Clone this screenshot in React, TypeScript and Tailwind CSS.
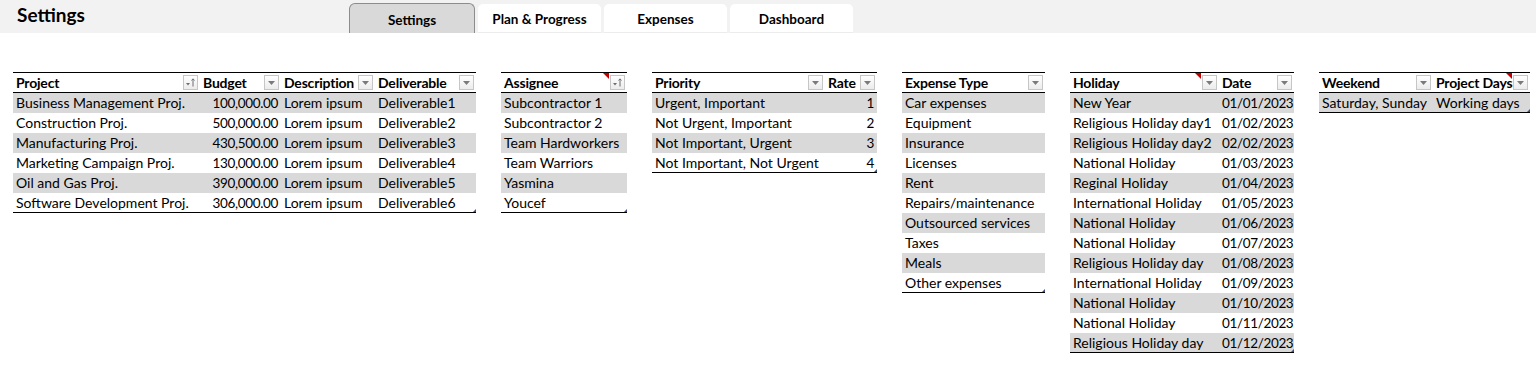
import React from 'react';

type Col = { title: string; width: string; align?: 'right'; sort?: boolean; note?: boolean };

interface TableProps {
  cols: Col[];
  rows: string[][];
  width: string;
}

function DropButton({ sort }: { sort?: boolean }) {
  return (
    <span className="absolute right-[2px] top-[2px] flex h-[15px] w-[15px] items-center justify-center border border-[#c6c6c6] bg-gradient-to-b from-white to-[#ececec]">
      {sort ? (
        <svg width="11" height="11" viewBox="0 0 11 11">
          <path d="M1 6 L5 6 L3 8.5 Z" fill="#6d6d6d" />
          <path d="M8 9.5 V2 M6.5 3.5 L8 1.8 L9.5 3.5" stroke="#6d6d6d" strokeWidth="1" fill="none" />
        </svg>
      ) : (
        <svg width="9" height="6" viewBox="0 0 9 6">
          <path d="M1 1 L8 1 L4.5 5 Z" fill="#7a7a7a" />
        </svg>
      )}
    </span>
  );
}

function SheetTable({ cols, rows, width }: TableProps) {
  return (
    <div className={`${width} shrink-0`}>
      <div className="flex h-[21px] border-y border-black">
        {cols.map(c => (
          <div
            key={c.title}
            className={`${c.width} relative shrink-0 pl-[3px] pt-[1px] text-[14px] font-bold leading-[18px] tracking-[-0.2px]`}
          >
            {c.title}
            {c.note && (
              <span className="absolute right-[18px] top-0 h-0 w-0 border-l-[6px] border-t-[6px] border-l-transparent border-t-[#c00000]" />
            )}
            <DropButton sort={c.sort} />
          </div>
        ))}
      </div>
      {rows.map((r, i) => (
        <div
          key={i}
          className={`relative flex h-[20px] ${i % 2 === 0 ? 'bg-[#d9d9d9]' : 'bg-white'} ${i === rows.length - 1 ? 'border-b border-black' : ''}`}
        >
          {r.map((cell, j) =>
            cols[j].align === 'right' ? (
              <div
                key={j}
                className={`${cols[j].width} shrink-0 whitespace-nowrap px-[3px] text-right text-[13.5px] leading-[20px] tracking-[-0.35px]`}
              >
                {cell}
              </div>
            ) : (
              <div key={j} className={`${cols[j].width} shrink-0 whitespace-nowrap px-[3px] text-[14px] leading-[20px]`}>
                {cell}
              </div>
            )
          )}
          {i === rows.length - 1 && (
            <span className="absolute bottom-0 right-0 h-0 w-0 border-b-[3px] border-l-[3px] border-b-[#3c4f8a] border-l-transparent" />
          )}
        </div>
      ))}
    </div>
  );
}

const tabs = ['Plan & Progress', 'Expenses', 'Dashboard'];

export default function App() {
  return (
    <div className="min-h-[392px] bg-white text-black" style={{ fontFamily: 'Lato, "Open Sans", sans-serif' }}>
      <div className="flex h-[33px] items-end bg-[#f2f2f2]">
        <div className="h-full w-[349px] shrink-0 pl-[17px] pt-[2px] text-[19px] font-bold leading-[26px]">Settings</div>
        <div className="flex items-end gap-[3px]">
          <div className="flex h-[30px] w-[126px] items-center justify-center rounded-t-[6px] border border-b-0 border-[#8c8c8c] bg-[#d9d9d9] pt-[3px] text-[13.5px] font-bold">
            Settings
          </div>
          {tabs.map(t => (
            <div
              key={t}
              className="flex h-[29px] w-[123px] items-center justify-center rounded-t-[5px] border-b border-[#ececec] bg-white pt-[3px] text-[13.5px] font-bold"
            >
              {t}
            </div>
          ))}
        </div>
      </div>

      <div className="flex items-start gap-[25px] pl-[13px] pt-[39px]">
        <SheetTable
          width="w-[463px]"
          cols={[
            { title: 'Project', width: 'w-[187px]', sort: true },
            { title: 'Budget', width: 'w-[81px]', align: 'right' },
            { title: 'Description', width: 'w-[94px]' },
            { title: 'Deliverable', width: 'w-[101px]' },
          ]}
          rows={[
            ['Business Management Proj.', '100,000.00', 'Lorem ipsum', 'Deliverable1'],
            ['Construction Proj.', '500,000.00', 'Lorem ipsum', 'Deliverable2'],
            ['Manufacturing Proj.', '430,500.00', 'Lorem ipsum', 'Deliverable3'],
            ['Marketing Campaign Proj.', '130,000.00', 'Lorem ipsum', 'Deliverable4'],
            ['Oil and Gas Proj.', '390,000.00', 'Lorem ipsum', 'Deliverable5'],
            ['Software Development Proj.', '306,000.00', 'Lorem ipsum', 'Deliverable6'],
          ]}
        />
        <SheetTable
          width="w-[126px]"
          cols={[{ title: 'Assignee', width: 'w-[126px]', sort: true, note: true }]}
          rows={[
            ['Subcontractor 1'],
            ['Subcontractor 2'],
            ['Team Hardworkers'],
            ['Team Warriors'],
            ['Yasmina'],
            ['Youcef'],
          ]}
        />
        <SheetTable
          width="w-[225px]"
          cols={[
            { title: 'Priority', width: 'w-[173px]' },
            { title: 'Rate', width: 'w-[52px]', align: 'right' },
          ]}
          rows={[
            ['Urgent, Important', '1'],
            ['Not Urgent, Important', '2'],
            ['Not Important, Urgent', '3'],
            ['Not Important, Not Urgent', '4'],
          ]}
        />
        <SheetTable
          width="w-[143px]"
          cols={[{ title: 'Expense Type', width: 'w-[143px]' }]}
          rows={[
            ['Car expenses'],
            ['Equipment'],
            ['Insurance'],
            ['Licenses'],
            ['Rent'],
            ['Repairs/maintenance'],
            ['Outsourced services'],
            ['Taxes'],
            ['Meals'],
            ['Other expenses'],
          ]}
        />
        <SheetTable
          width="w-[224px]"
          cols={[
            { title: 'Holiday', width: 'w-[149px]', note: true },
            { title: 'Date', width: 'w-[75px]', align: 'right' },
          ]}
          rows={[
            ['New Year', '01/01/2023'],
            ['Religious Holiday day1', '01/02/2023'],
            ['Religious Holiday day2', '02/02/2023'],
            ['National Holiday', '01/03/2023'],
            ['Reginal Holiday', '01/04/2023'],
            ['International Holiday', '01/05/2023'],
            ['National Holiday', '01/06/2023'],
            ['National Holiday', '01/07/2023'],
            ['Religious Holiday day', '01/08/2023'],
            ['International Holiday', '01/09/2023'],
            ['National Holiday', '01/10/2023'],
            ['National Holiday', '01/11/2023'],
            ['Religious Holiday day', '01/12/2023'],
          ]}
        />
        <SheetTable
          width="w-[211px]"
          cols={[
            { title: 'Weekend', width: 'w-[114px]' },
            { title: 'Project Days', width: 'w-[97px]', note: true },
          ]}
          rows={[['Saturday, Sunday', 'Working days']]}
        />
      </div>
    </div>
  );
}
